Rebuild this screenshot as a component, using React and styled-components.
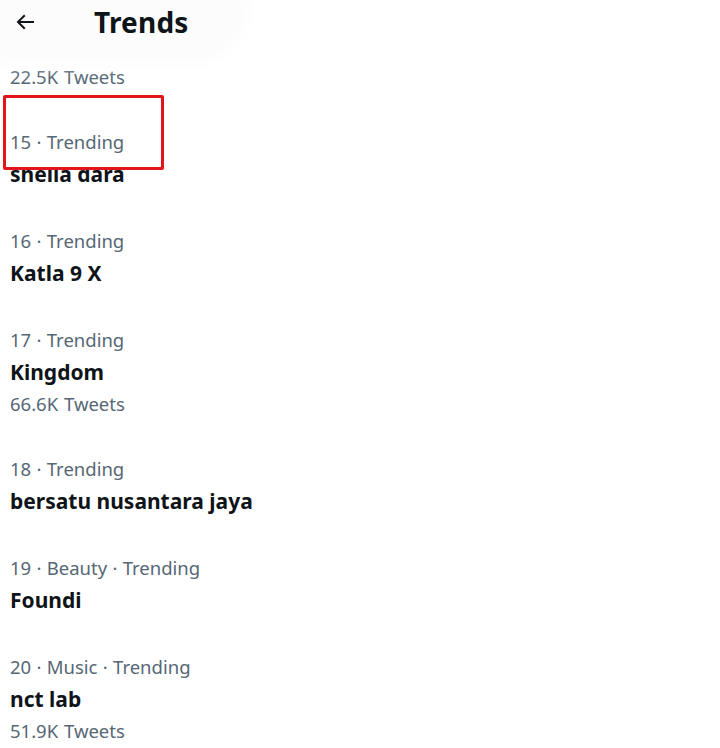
import React from "react";
import styled, { createGlobalStyle } from "styled-components";

const GlobalStyle = createGlobalStyle`
  html, body {
    margin: 0;
    padding: 0;
    background: #ffffff;
  }
  body {
    font-family: "Noto Sans", "Liberation Sans", Arial, sans-serif;
    -webkit-font-smoothing: antialiased;
  }
`;

// first entry is scrolled mostly under the header, only its count shows
const trends = [
  { rank: 14, tweets: "22.5K Tweets", partial: true },
  { rank: 15, meta: "Trending", title: "sheila dara", marked: true },
  { rank: 16, meta: "Trending", title: "Katla 9 X" },
  { rank: 17, meta: "Trending", title: "Kingdom", tweets: "66.6K Tweets" },
  { rank: 18, meta: "Trending", title: "bersatu nusantara jaya" },
  { rank: 19, meta: "Beauty · Trending", title: "Foundi" },
  { rank: 20, meta: "Music · Trending", title: "nct lab", tweets: "51.9K Tweets" },
];

const Screen = styled.div`
  position: relative;
  width: 720px;
  height: 748px;
  overflow: hidden;
  background: #ffffff;
`;

const Header = styled.header`
  position: absolute;
  top: 0;
  left: 0;
  z-index: 5;
  width: 240px;
  height: 56px;
  display: flex;
  align-items: center;
  gap: 56px;
  padding: 0 0 12px 12px;
  box-sizing: border-box;
  background: #fcfcfd;
  border-radius: 0 0 48px 0;
  box-shadow: 0 0 16px 8px #fcfcfd;
`;

const BackButton = styled.button`
  display: flex;
  align-items: center;
  justify-content: center;
  padding: 0;
  border: 0;
  background: transparent;
  color: #0f1419;
  width: 26px;
  height: 26px;
`;

const Title = styled.h1`
  margin: 0;
  font-size: 28px;
  font-weight: 700;
  color: #0f1419;
  letter-spacing: 0.2px;
`;

const List = styled.div`
  padding-top: 47px;
  display: flex;
  flex-direction: column;
`;

const Row = styled.div`
  position: relative;
  padding: ${(p) => (p.$partial ? "15px 10px 17px" : "17px 10px 17px")};
`;

const Meta = styled.div`
  position: relative;
  z-index: 2;
  height: 32px;
  line-height: 32px;
  font-size: 18.5px;
  word-spacing: 0.5px;
  color: #566775;
`;

const Name = styled.div`
  height: 33px;
  line-height: 33px;
  font-size: 21px;
  font-weight: 700;
  color: #0f1419;
`;

const Count = styled.div`
  height: 30px;
  line-height: 30px;
  font-size: 18.5px;
  word-spacing: 1px;
  color: #566775;
`;

const Marker = styled.div`
  position: absolute;
  z-index: 1;
  top: -14px;
  left: 3px;
  width: 161px;
  height: 75px;
  box-sizing: border-box;
  border: 3px solid #e3151a;
  border-radius: 2px;
  background: #ffffff;
`;

const ArrowLeft = () => (
  <svg width="24" height="24" viewBox="0 0 24 24" fill="currentColor">
    <path d="M7.414 13l5.043 5.04-1.414 1.42L3.586 12l7.457-7.46 1.414 1.42L7.414 11H21v2H7.414z" />
  </svg>
);

export default function App() {
  return (
    <>
      <GlobalStyle />
      <Screen>
        <Header>
          <BackButton aria-label="Back">
            <ArrowLeft />
          </BackButton>
          <Title>Trends</Title>
        </Header>
        <List>
          {trends.map((t) => (
            <Row key={t.rank} $partial={t.partial}>
              {t.marked && <Marker />}
              {t.meta && (
                <Meta>
                  {t.rank} · {t.meta}
                </Meta>
              )}
              {t.title && <Name>{t.title}</Name>}
              {t.tweets && <Count>{t.tweets}</Count>}
            </Row>
          ))}
        </List>
      </Screen>
    </>
  );
}
